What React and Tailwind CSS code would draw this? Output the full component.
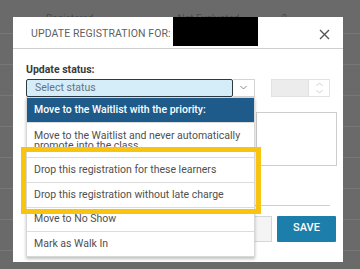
import React from 'react';

const font = { fontFamily: 'Roboto, "Liberation Sans", sans-serif' };

const options = [
    { label: 'Move to the Waitlist with the priority:', h: 'h-[24px]', active: true },
    { label: 'Move to the Waitlist and never automatically promote into the class', h: 'h-[35px]' },
    { label: 'Drop this registration for these learners', h: 'h-[25px]' },
    { label: 'Drop this registration without late charge', h: 'h-[25px]' },
    { label: 'Move to No Show', h: 'h-[24px]' },
    { label: 'Mark as Walk In', h: 'h-[25px]' },
];

const Chevron = ({ up }) => (
    <svg width="7" height="5" viewBox="0 0 7 5" fill="none" stroke="currentColor" strokeWidth="1">
        <path d={up ? 'M0.5 4L3.5 1L6.5 4' : 'M0.5 1L3.5 4L6.5 1'} />
    </svg>
);

const App = () => {
    return (
        <div className="relative w-[360px] h-[269px] overflow-hidden bg-[#6a6a6a]" style={font}>
            {/* page behind the overlay */}
            <div className="flex flex-col">
                <div className="h-[34px] border-b border-[#777] flex items-start pt-[11px] text-[10px] text-[#4a4a4a]">
                    <span className="ml-[46px]">Registered</span>
                    <span className="ml-[84px]">Not Evaluated</span>
                    <span className="ml-[42px]">0</span>
                </div>
                {[0, 1, 2, 3, 4, 5, 6].map((i) => (
                    <div key={i} className="h-[31px] border-b border-[#777]" />
                ))}
            </div>

            {/* modal */}
            <div className="absolute left-[13px] top-[17px] w-[330px] h-[245px] bg-white flex flex-col">
                <div className="h-[32px] shrink-0 border-b border-[#cfcfcf] flex items-start">
                    <span className="ml-[18px] mt-[12px] text-[10.5px] text-[#5f5f5f] tracking-[0.1px] leading-none">
                        UPDATE REGISTRATION FOR:
                    </span>
                    <div className="ml-[2px] w-[85px] h-[29px] bg-black" />
                    <span className="ml-auto mr-[13px] mt-[12px] text-[#555]">
                        <svg width="11" height="11" viewBox="0 0 11 11" stroke="currentColor" strokeWidth="1.4">
                            <path d="M1 1L10 10M10 1L1 10" />
                        </svg>
                    </span>
                </div>

                <div className="px-[13px] pt-[16px] flex flex-col">
                    <div className="text-[10.5px] font-bold text-[#3a3a3a] leading-none">Update status:</div>
                    <div className="mt-[3px] flex items-center">
                        <div className="w-[208px] h-[18px] bg-[#d5ecf9] border border-[#2d3a44] rounded-[2px] flex items-center px-[8px] text-[10.5px] text-[#66737c]">
                            Select status
                        </div>
                        <div className="w-[22px] h-[18px] border border-[#d4d4d4] border-l-0 flex items-center justify-center text-[#888]">
                            <Chevron />
                        </div>
                        <div className="ml-[16px] w-[38px] h-[18px] bg-[#ececec] border border-[#e2e2e2]" />
                        <div className="w-[21px] h-[18px] border border-[#e2e2e2] border-l-0 flex flex-col items-center justify-center gap-[2px] text-[#cfcfcf]">
                            <Chevron up />
                            <Chevron />
                        </div>
                    </div>
                    <div className="mt-[15px] ml-[230px] w-[81px] h-[54px] border border-[#cdcdcd]" />
                </div>

                <div className="mt-[39px] mx-[13px] border-t border-[#cfcfcf]" />
                <div className="mt-[10px] pr-[7px] flex justify-end gap-[5px]">
                    <div className="w-[40px] h-[26px] bg-[#f4f4f4] border border-[#d6d6d6]" />
                    <button className="w-[59px] h-[26px] bg-[#1b7eab] text-white text-[11px] font-medium flex items-center justify-center rounded-[1px]">
                        SAVE
                    </button>
                </div>

                {/* open status list */}
                <div className="absolute left-[13px] top-[80px] w-[229px] bg-white border border-[#d8d8d8] shadow-[0_2px_3px_rgba(0,0,0,0.25)] flex flex-col">
                    {options.map((o, i) => (
                        <div
                            key={i}
                            className={`${o.h} overflow-hidden px-[7px] text-[10.5px] ${
                                o.active
                                    ? 'bg-[#1e5b8b] text-white font-medium flex items-center'
                                    : 'text-[#505050] border-t border-[#dcdcdc] flex items-center'
                            }`}
                        >
                            <span className={i === 1 ? 'leading-[10px] pt-[8px] self-start' : 'leading-none'}>{o.label}</span>
                        </div>
                    ))}
                </div>

                {/* highlight frame */}
                <div className="absolute left-[8px] top-[130px] w-[240px] h-[67px] border-[5px] border-[#f8c40f]" />
            </div>
        </div>
    );
};

export default App;
